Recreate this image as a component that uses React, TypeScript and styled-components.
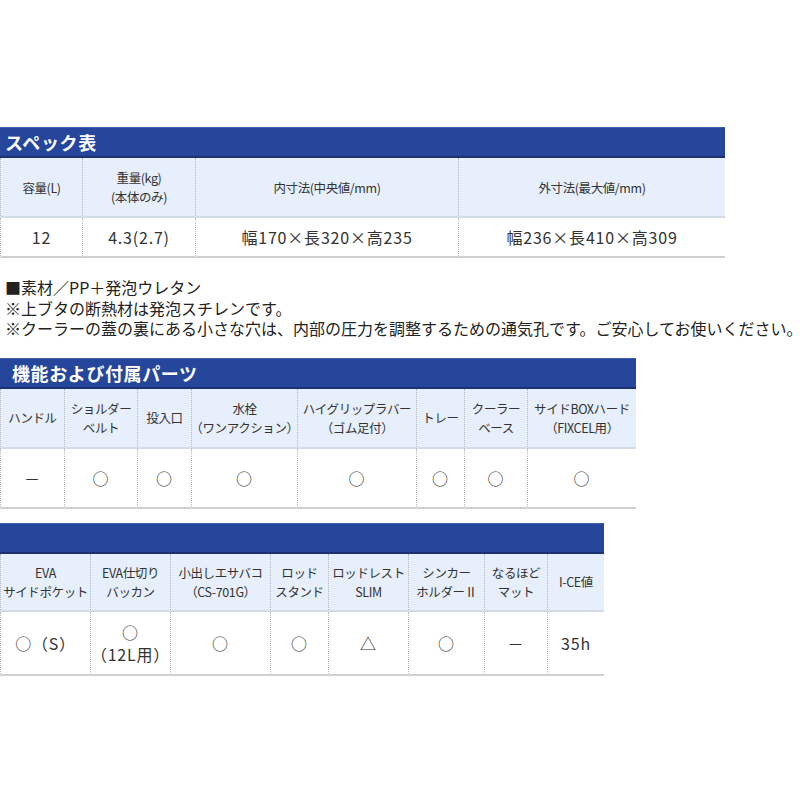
import React from "react";
import styled, { createGlobalStyle } from "styled-components";

const Global = createGlobalStyle`
  html, body { margin: 0; padding: 0; background: #fff; overflow: hidden; }
  body { font-family: "Noto Sans CJK JP", "Noto Sans", sans-serif; color: #333; }
`;

const Page = styled.div`
  padding-top: 127px;
  width: 800px;
`;

const Section = styled.section<{ $w: number; $mb: number }>`
  width: ${(p) => p.$w}px;
  margin-bottom: ${(p) => p.$mb}px;
`;

const Bar = styled.div<{ $indent: number }>`
  height: 28px;
  background: #25469b;
  border-top: 1px solid #3f5eae;
  border-bottom: 2px solid #1a326f;
  color: #fff;
  font-weight: 700;
  font-size: 18px;
  line-height: 28px;
  padding-left: ${(p) => p.$indent}px;
  letter-spacing: 0.6px;
`;

const Grid = styled.div<{ $cols: number[] }>`
  display: grid;
  grid-template-columns: ${(p) => p.$cols.map((c) => `${c}px`).join(" ")};
  border-right: 1px dotted #b8b8b8;
`;

const HeadCell = styled.div<{ $h: number }>`
  height: ${(p) => p.$h}px;
  background: #e6effb;
  border-left: 1px dotted #b8b8b8;
  border-bottom: 2px solid #d3dbe6;
  display: flex;
  align-items: center;
  justify-content: center;
  text-align: center;
  font-size: 12.5px;
  letter-spacing: -0.4px;
  line-height: 19px;
  white-space: pre;
  color: #333;
  box-sizing: border-box;
`;

const DataCell = styled.div<{ $h: number }>`
  height: ${(p) => p.$h}px;
  background: #fff;
  border-left: 1px dotted #b8b8b8;
  border-bottom: 2px solid #cfcfcf;
  display: flex;
  align-items: center;
  justify-content: center;
  text-align: center;
  font-size: 16px;
  letter-spacing: 0.8px;
  line-height: 22px;
  white-space: pre;
  color: #333;
  box-sizing: border-box;
`;

const Notes = styled.div`
  margin-bottom: 19px;
  padding-left: 5px;
  font-size: 16px;
  line-height: 20.5px;
  white-space: nowrap;
  color: #222;
`;

type TableProps = {
  title: string;
  indent: number;
  width: number;
  mb: number;
  cols: number[];
  heads: string[];
  data: string[];
  headH: number;
  dataH: number;
};

const SpecTable = ({ title, indent, width, mb, cols, heads, data, headH, dataH }: TableProps) => (
  <Section $w={width} $mb={mb}>
    <Bar $indent={indent}>{title}</Bar>
    <Grid $cols={cols}>
      {heads.map((h, i) => (
        <HeadCell key={"h" + i} $h={headH}>{h}</HeadCell>
      ))}
      {data.map((d, i) => (
        <DataCell key={"d" + i} $h={dataH}>{d}</DataCell>
      ))}
    </Grid>
  </Section>
);

export default function App() {
  return (
    <Page>
      <Global />
      <SpecTable
        title="スペック表"
        indent={5}
        width={725}
        mb={19}
        cols={[82, 113, 263, 267]}
        heads={["容量(L)", "重量(kg)\n(本体のみ)", "内寸法(中央値/mm)", "外寸法(最大値/mm)"]}
        data={["12", "4.3(2.7)", "幅170×長320×高235", "幅236×長410×高309"]}
        headH={60}
        dataH={40}
      />
      <Notes>
        ■素材／PP＋発泡ウレタン
        <br />
        ※上ブタの断熱材は発泡スチレンです。
        <br />
        ※クーラーの蓋の裏にある小さな穴は、内部の圧力を調整するための通気孔です。ご安心してお使いください。
      </Notes>
      <SpecTable
        title="機能および付属パーツ"
        indent={12}
        width={636}
        mb={14}
        cols={[64, 73, 54, 106, 119, 48, 63, 109]}
        heads={[
          "ハンドル",
          "ショルダー\nベルト",
          "投入口",
          "水栓\n（ワンアクション）",
          "ハイグリップラバー\n（ゴム足付）",
          "トレー",
          "クーラー\nベース",
          "サイドBOXハード\n（FIXCEL用）",
        ]}
        data={["－", "○", "○", "○", "○", "○", "○", "○"]}
        headH={60}
        dataH={60}
      />
      <SpecTable
        title=" "
        indent={12}
        width={604}
        mb={0}
        cols={[90, 80, 100, 58, 80, 76, 63, 57]}
        heads={[
          "EVA\nサイドポケット",
          "EVA仕切り\nバッカン",
          "小出しエサバコ\n（CS-701G）",
          "ロッド\nスタンド",
          "ロッドレスト\nSLIM",
          "シンカー\nホルダーⅡ",
          "なるほど\nマット",
          "I-CE値",
        ]}
        data={["○（S）", "○\n（12L用）", "○", "○", "△", "○", "－", "35h"]}
        headH={58}
        dataH={64}
      />
    </Page>
  );
}
